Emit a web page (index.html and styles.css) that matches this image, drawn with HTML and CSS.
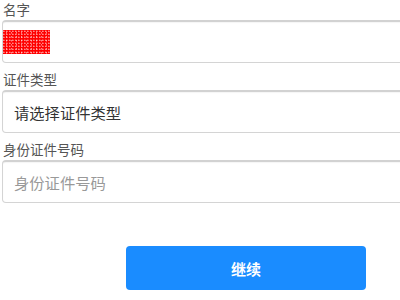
FILE: index.html
```html
<!DOCTYPE html>
<html lang="zh">
<head>
<meta charset="utf-8">
<link rel="stylesheet" href="styles.css">
</head>
<body>
<div class="form">
  <div class="field">
    <div class="label">名字</div>
    <div class="input"><span class="redact"></span></div>
  </div>
  <div class="field">
    <div class="label">证件类型</div>
    <div class="input"><span class="value">请选择证件类型</span></div>
  </div>
  <div class="field">
    <div class="label">身份证件号码</div>
    <div class="input"><span class="placeholder">身份证件号码</span></div>
  </div>
  <div class="actions">
    <button class="btn">继续</button>
  </div>
</div>
</body>
</html>
```

FILE: styles.css
```css
html, body {
  margin: 0;
  padding: 0;
  background: #fff;
  overflow: hidden;
}
body {
  font-family: "Noto Sans CJK SC", "Noto Sans", sans-serif;
}
.form {
  width: 490px;
  padding-left: 2px;
  display: flex;
  flex-direction: column;
}
.field {
  display: flex;
  flex-direction: column;
  margin-bottom: 7px;
}
.label {
  font-size: 13.5px;
  line-height: 18px;
  height: 18px;
  color: #555;
  padding-left: 1px;
  margin-bottom: 2px;
}
.input {
  height: 43px;
  box-sizing: border-box;
  border: 1px solid #d4d4d4;
  border-top: 2px solid #d2d2d2;
  border-radius: 4px;
  box-shadow: inset 0 1px 1px rgba(0,0,0,0.04);
  display: flex;
  align-items: center;
  padding-left: 11px;
  font-size: 15.3px;
}
.value { color: #333; }
.placeholder { color: #999; }
.redact {
  display: block;
  width: 47px;
  height: 24px;
  margin-left: -11px;
  background-color: #f00;
  background-image:
    radial-gradient(circle at 30% 40%, rgba(255,255,255,0.55) 0.5px, transparent 1px),
    radial-gradient(circle at 70% 70%, rgba(255,210,210,0.6) 0.5px, transparent 1px);
  background-size: 3px 3px, 5px 4px;
}
.actions {
  display: flex;
  justify-content: center;
  margin-top: 36px;
}
.btn {
  width: 240px;
  height: 44px;
  margin-left: -2px;
  border: none;
  border-radius: 4px;
  background: #1a8cff;
  color: #fff;
  font-family: "Noto Sans CJK SC", sans-serif;
  font-size: 15px;
  font-weight: bold;
  padding: 0;
}
```
